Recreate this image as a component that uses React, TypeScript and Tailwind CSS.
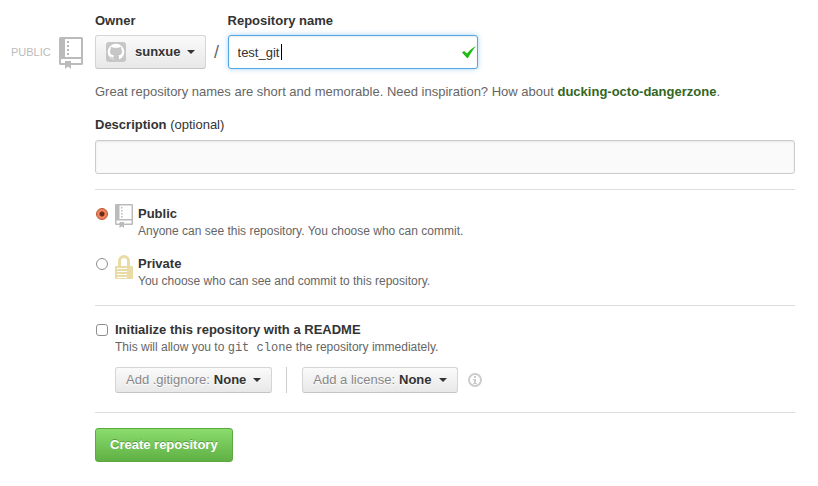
import React from "react";

function RepoIcon({ className }: { className: string }) {
  return (
    <svg viewBox="0 0 24 32" className={className} fill="currentColor" aria-hidden="true">
      <path
        fillRule="evenodd"
        d="M1.5 0h21A1.5 1.5 0 0 1 24 1.500V26.500a1.500 1.500 0 0 1-1.500 1.500H12v4l-3-2.500L6 32v-4H1.500A1.500 1.500 0 0 1 0 26.500v-25A1.500 1.500 0 0 1 1.500 0ZM6 2v18h16V2ZM2 22v4h4v-2h6v2h10v-4Z"
      />
      <path d="M8 4h2v2H8zM8 8h2v2H8zM8 12h2v2H8zM8 16h2v2H8z" />
    </svg>
  );
}

function LockIcon({ className }: { className: string }) {
  return (
    <svg viewBox="0 0 18 24" className={className} fill="currentColor" aria-hidden="true">
      <path
        fillRule="evenodd"
        d="M3 11V6a6 6 0 0 1 12 0v5h2a1 1 0 0 1 1 1v11a1 1 0 0 1-1 1H1a1 1 0 0 1-1-1V12a1 1 0 0 1 1-1ZM6 11h6V6a3 3 0 0 0-6 0ZM2 13v1h10v-1ZM2 16v1h10v-1ZM2 19v1h10v-1ZM2 22v1h10v-1Z"
      />
    </svg>
  );
}

function Avatar() {
  return (
    <svg viewBox="0 0 20 20" className="h-5 w-5" aria-hidden="true">
      <rect width="20" height="20" rx="3" fill="#c6c6c6" />
      <circle cx="10" cy="10" r="8.300" fill="#fff" />
      <path
        d="M5 4.500 7.400 5.800h5.200L15 4.500l.4 2.800c.9 1.300.9 3.700-.3 4.900-.7.700-1.700 1-2.800 1.200.5.500.7 1 .7 1.800V18.500H7.400v-1.900c-1.800.3-2.300-.4-2.900-1.600l-.9-.8c1.700-.1 1.900 1.500 3.800 1.200 0-.8.200-1.400.6-1.900-1.100-.2-2.300-.6-3-1.300-1.200-1.200-1.300-3.600-.4-4.900Z"
        fill="#c6c6c6"
      />
    </svg>
  );
}

function Caret() {
  return (
    <svg viewBox="0 0 8 4" className="h-1 w-2" fill="#333" aria-hidden="true">
      <path d="M0 0h8L4 4Z" />
    </svg>
  );
}

const grayButton =
  "flex items-center rounded-[3px] border border-[#d5d5d5] border-b-[#c4c4c4] bg-linear-to-b from-[#fafafa] to-[#e8e8e8] font-bold text-[#333] [text-shadow:0_1px_0_rgba(255,255,255,0.9)]";

const radio =
  "h-3 w-3 shrink-0 appearance-none rounded-full border border-[#8e8e8e] bg-white checked:border-[#b5532f] checked:bg-[radial-gradient(circle,#6b2a17_0_2px,#f0845c_3px)]";

function Visibility(props: {
  id: string;
  title: string;
  note: string;
  checked?: boolean;
  icon: React.ReactNode;
}) {
  return (
    <div className="flex">
      <input
        id={props.id}
        type="radio"
        name="visibility"
        defaultChecked={props.checked}
        className={`${radio} mt-[3px] ml-px`}
      />
      <label htmlFor={props.id} className="ml-[7px] flex">
        <span className="w-[23px] shrink-0">{props.icon}</span>
        <span>
          <span className="block font-bold">{props.title}</span>
          <span className="block text-[12px] leading-4 text-[#666]">{props.note}</span>
        </span>
      </label>
    </div>
  );
}

export default function App() {
  return (
    <main className="flex bg-white pr-[23px] pb-6 font-['Liberation_Sans',Arial,sans-serif] text-[13px] leading-[18px] text-[#333]">
      <aside className="flex w-[95px] shrink-0 items-start pt-[37px] pl-[11px] text-[#bbb]">
        <span className="w-12 pt-1.5 text-[11px] leading-[18px]">PUBLIC</span>
        <RepoIcon className="h-8 w-6" />
      </aside>

      <form className="min-w-0 flex-1 pt-3" onSubmit={(e) => e.preventDefault()}>
        <div className="flex">
          <div>
            <label htmlFor="owner" className="block font-bold">
              Owner
            </label>
            <button id="owner" type="button" className={`${grayButton} mt-[5px] h-[34px] px-2.5`}>
              <Avatar />
              <span className="mr-1.5 ml-[9px]">sunxue</span>
              <Caret />
            </button>
          </div>
          <span className="w-[22px] pt-7 text-center text-[18px] leading-6 text-[#666]">/</span>
          <div>
            <label htmlFor="name" className="block font-bold">
              Repository name
            </label>
            <div className="relative mt-[5px]">
              <input
                id="name"
                type="text"
                defaultValue="test_git"
                className="block h-[34px] w-[250px] rounded-[3px] border border-[#51a7e8] bg-white px-[9px] shadow-[inset_0_1px_2px_rgba(0,0,0,0.075),0_0_5px_rgba(81,167,232,0.5)] outline-none"
              />
              <span className="absolute top-[9px] left-[53px] h-4 w-px bg-black" />
              <svg viewBox="0 0 14 12" className="absolute top-[11px] right-[2px] h-3 w-3.5" fill="#1ebc12" aria-hidden="true">
                <path d="M0 6.500 2 5 5 7.500C7.500 4.500 10.500 1.500 14 0 11 3.500 8.500 7.500 6 12H5Z" />
              </svg>
            </div>
          </div>
        </div>

        <p className="mt-3.5 text-[#666]">
          Great repository names are short and memorable. Need inspiration? How about{" "}
          <strong className="text-[#336622]">ducking-octo-dangerzone</strong>.
        </p>

        <label htmlFor="description" className="mt-[15px] block">
          <strong>Description</strong> (optional)
        </label>
        <input
          id="description"
          type="text"
          className="mt-1.5 block h-[34px] w-full rounded-[3px] border border-[#ccc] bg-[#fafafa] px-[9px] shadow-[inset_0_1px_2px_rgba(0,0,0,0.075)] outline-none"
        />

        <hr className="my-[15px] border-[#ddd]" />

        <div className="flex flex-col gap-4">
          <Visibility
            id="public"
            title="Public"
            note="Anyone can see this repository. You choose who can commit."
            checked
            icon={<RepoIcon className="-mt-px h-6 w-[18px] text-[#bbb]" />}
          />
          <Visibility
            id="private"
            title="Private"
            note="You choose who can see and commit to this repository."
            icon={<LockIcon className="h-6 w-[18px] text-[#e9dba5]" />}
          />
        </div>

        <hr className="mt-4 mb-[15px] border-[#ddd]" />

        <div className="flex">
          <input
            id="readme"
            type="checkbox"
            className="mt-[3px] ml-px h-3 w-3 shrink-0 appearance-none rounded-[3px] border border-[#8e8e8e] bg-white"
          />
          <div className="ml-[7px]">
            <label htmlFor="readme" className="block">
              <span className="block font-bold">Initialize this repository with a README</span>
              <span className="block text-[12px] leading-4 text-[#666]">
                This will allow you to{" "}
                <code className="font-['Liberation_Mono',monospace] leading-none">git clone</code> the
                repository immediately.
              </span>
            </label>
            <div className="mt-3 flex items-center">
              <button type="button" className={`${grayButton} h-[26px] px-2.5`}>
                <span className="mr-1 font-normal text-[#888]">Add .gitignore:</span>
                <span className="mr-[7px]">None</span>
                <Caret />
              </button>
              <span className="mr-[15px] ml-3.5 h-[26px] w-px bg-[#ccc]" />
              <button type="button" className={`${grayButton} h-[26px] px-2.5`}>
                <span className="mr-1 font-normal text-[#888]">Add a license:</span>
                <span className="mr-[7px]">None</span>
                <Caret />
              </button>
              <svg viewBox="0 0 14 14" className="ml-2.5 h-3.5 w-3.5" aria-hidden="true">
                <circle cx="7" cy="7" r="6" fill="none" stroke="#ccc" strokeWidth="2" />
                <path d="M6 3h2v2H6zM5 6h3v4h1v1H5v-1h1V7H5Z" fill="#ccc" />
              </svg>
            </div>
          </div>
        </div>

        <hr className="mt-[19px] mb-[15px] border-[#ddd]" />

        <button
          type="submit"
          className="h-[34px] rounded-[3px] border border-[#5ca941] bg-linear-to-b from-[#8add6d] to-[#60b044] px-3.5 font-bold text-white [text-shadow:0_-1px_0_rgba(0,0,0,0.25)]"
        >
          Create repository
        </button>
      </form>
    </main>
  );
}
